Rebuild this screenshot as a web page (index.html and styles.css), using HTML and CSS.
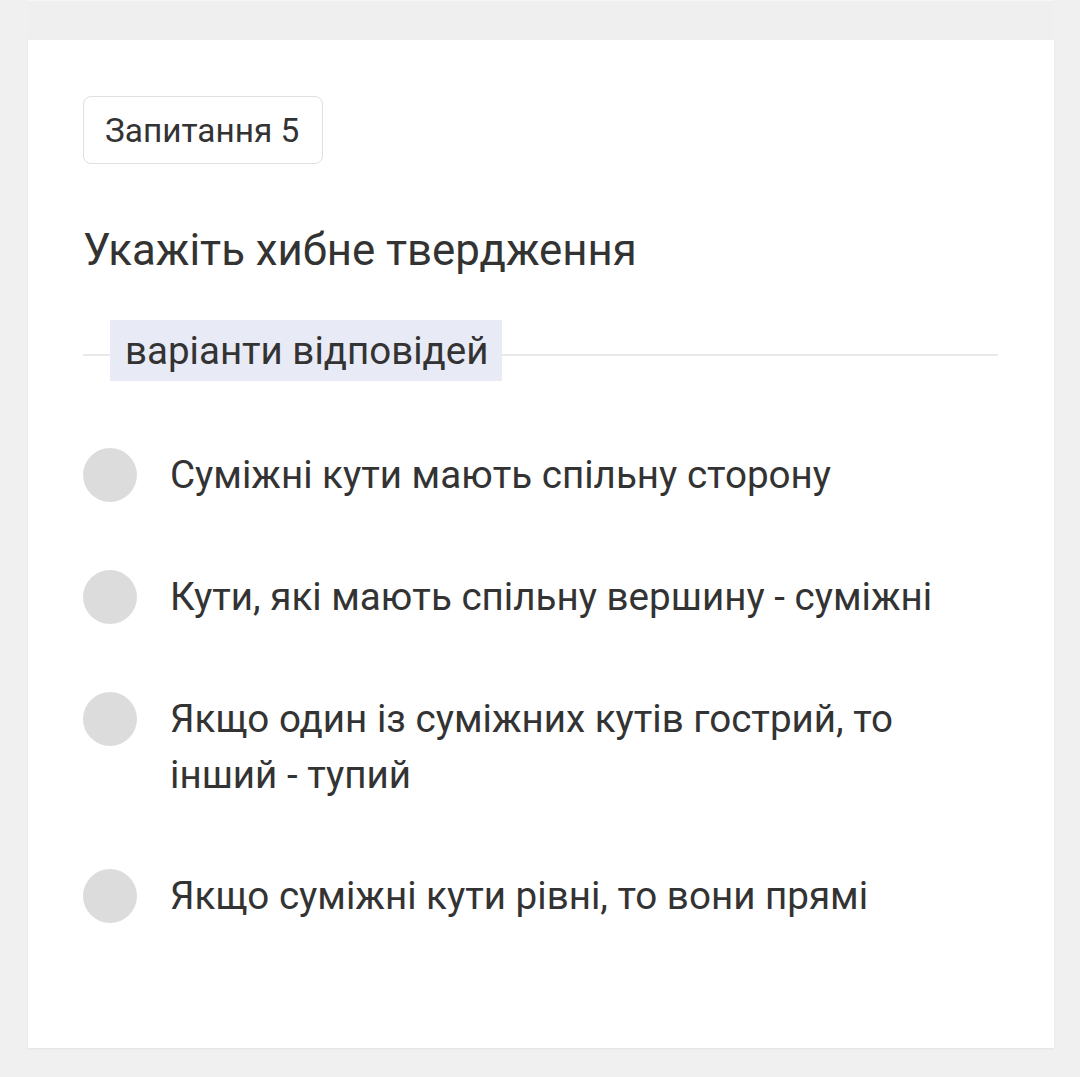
FILE: index.html
```html
<!DOCTYPE html>
<html lang="uk">
<head>
<meta charset="utf-8">
<link rel="stylesheet" href="styles.css">
</head>
<body>
<div class="top-strip"></div>
<main class="card">
  <div class="badge">Запитання 5</div>
  <h1 class="question">Укажіть хибне твердження</h1>
  <div class="legend-row">
    <span class="legend">варіанти відповідей</span>
  </div>
  <ul class="options">
    <li class="option"><span class="radio"></span><span class="label">Суміжні кути мають спільну сторону</span></li>
    <li class="option"><span class="radio"></span><span class="label">Кути, які мають спільну вершину - суміжні</span></li>
    <li class="option"><span class="radio"></span><span class="label">Якщо один із суміжних кутів гострий, то інший - тупий</span></li>
    <li class="option option-last"><span class="radio"></span><span class="label">Якщо суміжні кути рівні, то вони прямі</span></li>
  </ul>
</main>
</body>
</html>
```
FILE: styles.css
```css
html, body {
  margin: 0;
  padding: 0;
}
body {
  background: #f0f0f0;
  font-family: Roboto, "Noto Sans", sans-serif;
  color: #333;
  width: 1080px;
  height: 1077px;
  overflow: hidden;
}
.top-strip {
  height: 40px;
  margin: 0 26px 0 28px;
  background: #efefef;
  border-top: 1px solid #f6f6f6;
  box-sizing: border-box;
}
.card {
  margin-left: 28px;
  width: 1026px;
  height: 1008px;
  background: #fff;
  box-sizing: border-box;
  padding: 56px 56px 0 55px;
  box-shadow: 0 1px 2px rgba(0,0,0,0.06);
}
.badge {
  display: inline-flex;
  align-items: center;
  box-sizing: border-box;
  height: 68px;
  width: 240px;
  padding-left: 21px;
  border: 1.5px solid #e0e0e0;
  border-radius: 8px;
  font-size: 33.4px;
}
.question {
  margin: 0;
  padding-top: 58px;
  font-weight: 400;
  font-size: 43.8px;
  line-height: 56px;
}
.legend-row {
  margin-top: 42px;
  display: flex;
  align-items: center;
  height: 61px;
  padding-left: 27px;
  background: linear-gradient(#e9e9e9, #e9e9e9) 0 34px / 100% 2px no-repeat;
}
.legend {
  background: #e8eaf6;
  height: 61px;
  line-height: 61px;
  padding: 0 14px 0 15px;
  font-size: 38.5px;
}
.options {
  list-style: none;
  margin: 66px 0 0;
  padding: 0;
  display: flex;
  flex-direction: column;
  gap: 66px;
}
.option {
  display: flex;
  align-items: flex-start;
  gap: 33px;
}
.option-last {
  margin-top: -1px;
}
.radio {
  flex: none;
  width: 54px;
  height: 54px;
  margin-top: 1px;
  border-radius: 50%;
  background: #dcdcdc;
}
.label {
  flex: 1;
  font-size: 38.6px;
  line-height: 56px;
}
```
